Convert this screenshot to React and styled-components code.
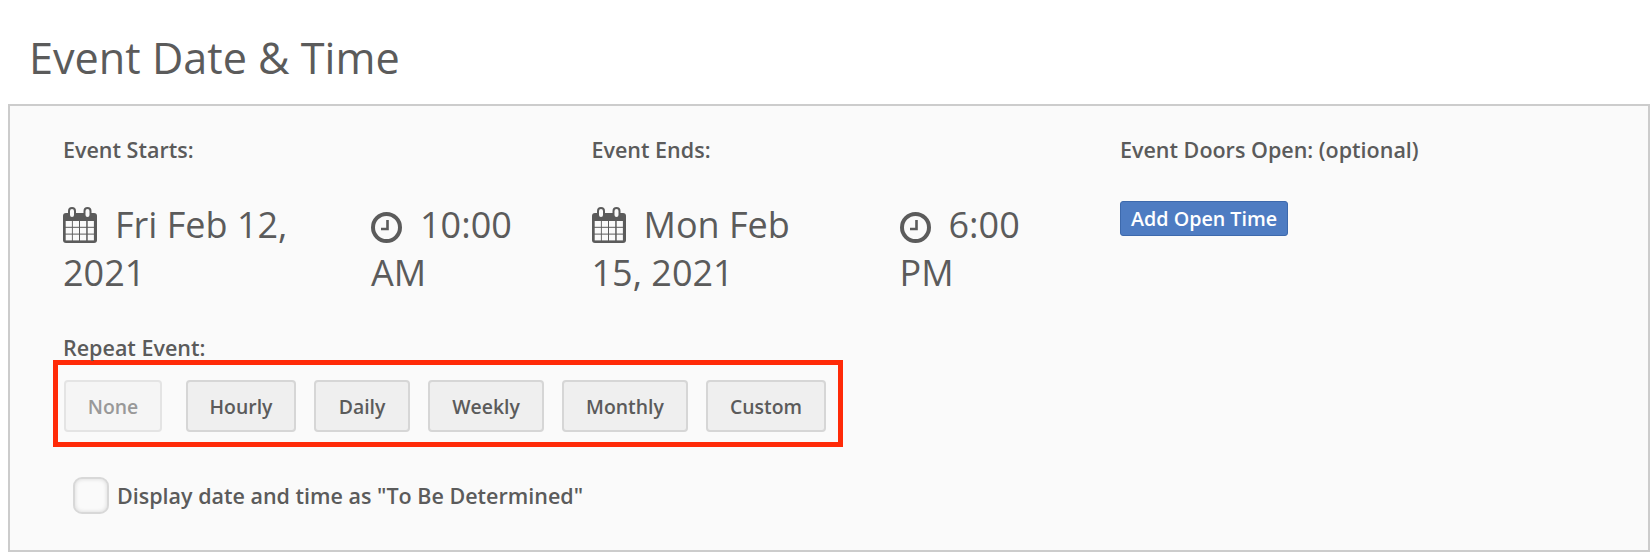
import styled, { createGlobalStyle } from 'styled-components';

const GlobalStyle = createGlobalStyle`
  html, body {
    margin: 0;
    padding: 0;
    background: #fff;
  }
  body {
    font-family: "Open Sans", "Noto Sans", sans-serif;
    color: #5b5b5b;
  }
`;

const Page = styled.div`
  width: 1652px;
  height: 554px;
  padding: 25px 2px 0 8px;
  box-sizing: border-box;
  overflow: hidden;
`;

const Title = styled.h2`
  margin: 0 0 14px 21px;
  font-size: 43.2px;
  font-weight: 400;
  line-height: 65px;
  color: #5b5b5b;
`;

const Panel = styled.div`
  box-sizing: border-box;
  height: 448px;
  padding: 30px 53px 0;
  background: #fafafa;
  border: 2px solid #ccc;
`;

const Columns = styled.div`
  display: grid;
  grid-template-columns: 528.5px 528.5px 1fr;
`;

const Label = styled.div`
  font-size: 21.5px;
  font-weight: 600;
  line-height: 28px;
  color: #5b5b5b;
`;

const DateRow = styled.div`
  display: grid;
  grid-template-columns: 308px 170px;
  margin-top: 37px;
`;

const Big = styled.div`
  padding-right: ${p => p.$pad || 0}px;
  font-size: 36px;
  line-height: 48px;
  color: #5b5b5b;
`;

const Glyph = styled.svg`
  width: ${p => p.$w}px;
  height: ${p => p.$h}px;
  margin-right: ${p => p.$gap}px;
  vertical-align: ${p => p.$drop}px;
`;

const OpenBtn = styled.button`
  display: block;
  height: 35px;
  margin-top: 37px;
  padding: 0 10px;
  font-family: inherit;
  font-size: 19.7px;
  font-weight: 600;
  color: #fff;
  background: #4e7cc2;
  border: 1px solid #3d69ac;
  border-radius: 3px;
`;

const RepeatBlock = styled.div`
  margin-top: 37px;
`;

const RepeatBox = styled.div`
  display: flex;
  width: 790px;
  height: 87px;
  box-sizing: border-box;
  margin: -2px 0 0 -10px;
  padding: 15px 0 0 6px;
  border: 5px solid #ff2a08;
`;

const Choice = styled.button`
  width: ${p => p.$w}px;
  height: 52px;
  margin-right: ${p => p.$gap}px;
  padding: 0;
  font-family: inherit;
  font-size: 19.4px;
  font-weight: 600;
  color: ${p => (p.disabled ? '#999' : '#5b5b5b')};
  background: ${p => (p.disabled ? '#f5f5f5' : '#efefef')};
  border: 2px solid ${p => (p.disabled ? '#e4e4e4' : '#d6d6d6')};
  border-radius: 4px;
`;

const CheckRow = styled.label`
  display: flex;
  align-items: center;
  margin: 30px 0 0 10px;
  font-size: 21.5px;
  font-weight: 600;
  color: #5b5b5b;
`;

const Box = styled.span`
  width: 36px;
  height: 37px;
  margin-right: 8px;
  box-sizing: border-box;
  background: #fafafa;
  border: 2px solid #d8d8d8;
  border-radius: 9px;
  box-shadow: inset 0 0 4px rgba(0, 0, 0, 0.14);
`;

const cellX = [2.7, 9.8, 17, 24.7];
const cellY = [14, 20.8, 27.6];

const CalendarIcon = () => (
  <Glyph $w={34} $h={36} $gap={18} $drop={-5} viewBox="0 0 34 36">
    <rect x="0" y="6" width="34" height="30" rx="3" fill="#5b5b5b" />
    {cellY.map(y => cellX.map(x => (
      <rect key={`${x}-${y}`} x={x} y={y} width="6.2" height="5.8" fill="#fafafa" />
    )))}
    <rect x="6" y="1" width="6" height="10" rx="3" fill="#fafafa" stroke="#5b5b5b" strokeWidth="2" />
    <rect x="21.5" y="1" width="6" height="10" rx="3" fill="#fafafa" stroke="#5b5b5b" strokeWidth="2" />
  </Glyph>
);

const ClockIcon = () => (
  <Glyph $w={31} $h={31} $gap={18} $drop={-5} viewBox="0 0 31 31">
    <circle cx="15.5" cy="15.5" r="13.5" fill="none" stroke="#5b5b5b" strokeWidth="4" />
    <path d="M16.5 8v9H10" fill="none" stroke="#5b5b5b" strokeWidth="2.6" />
  </Glyph>
);

const choices = [
  { name: 'None', w: 98, gap: 24, off: true },
  { name: 'Hourly', w: 110, gap: 18 },
  { name: 'Daily', w: 96, gap: 18 },
  { name: 'Weekly', w: 116, gap: 18 },
  { name: 'Monthly', w: 126, gap: 18 },
  { name: 'Custom', w: 120, gap: 0 },
];

const When = ({ day, time }) => (
  <DateRow>
    <Big $pad={50}><CalendarIcon />{day}</Big>
    <Big><ClockIcon />{time}</Big>
  </DateRow>
);

export default function App() {
  return (
    <Page>
      <GlobalStyle />
      <Title>Event Date &amp; Time</Title>
      <Panel>
        <Columns>
          <div>
            <Label>Event Starts:</Label>
            <When day="Fri Feb 12, 2021" time="10:00 AM" />
          </div>
          <div>
            <Label>Event Ends:</Label>
            <When day="Mon Feb 15, 2021" time="6:00 PM" />
          </div>
          <div>
            <Label>Event Doors Open: (optional)</Label>
            <OpenBtn>Add Open Time</OpenBtn>
          </div>
        </Columns>
        <RepeatBlock>
          <Label>Repeat Event:</Label>
          <RepeatBox>
            {choices.map(c => (
              <Choice key={c.name} $w={c.w} $gap={c.gap} disabled={c.off}>{c.name}</Choice>
            ))}
          </RepeatBox>
        </RepeatBlock>
        <CheckRow>
          <Box />
          Display date and time as "To Be Determined"
        </CheckRow>
      </Panel>
    </Page>
  );
}
